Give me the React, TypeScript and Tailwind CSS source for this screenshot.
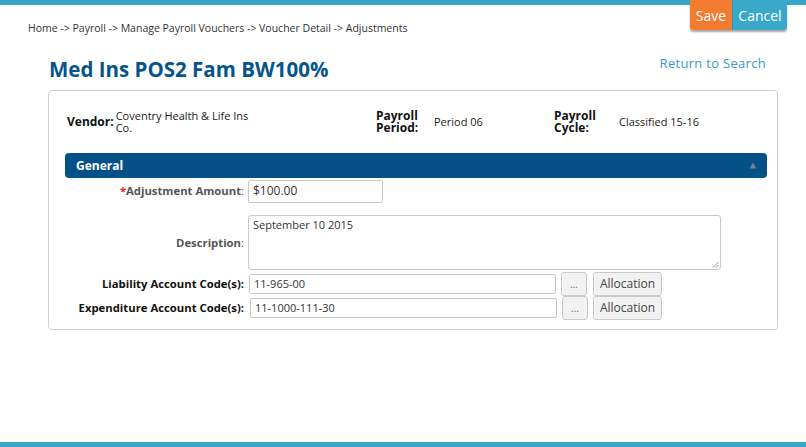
import React from "react";

const font = { fontFamily: '"Open Sans", "Noto Sans", sans-serif' };

export default function App() {
  return (
    <div className="relative w-[806px] h-[447px] bg-white overflow-hidden text-[#333]" style={font}>
      <div className="h-[5px] bg-[#38a6c8]" />
      <div className="absolute top-0 right-[19px] flex shadow-[0_2px_2px_rgba(0,0,0,0.35)] rounded-b-[3px] overflow-hidden">
        <button className="h-[30px] w-[42px] bg-[#f27b30] text-white text-[14px] leading-none pt-[1px]">Save</button>
        <button className="h-[30px] w-[55px] bg-[#3aa8c9] text-white text-[14px] leading-none pt-[1px] border-l border-[#2e95b5]">Cancel</button>
      </div>

      <div className="pl-[28px] pt-[16px] text-[10.5px] leading-[14px] text-[#333]">
        Home -&gt; Payroll -&gt; Manage Payroll Vouchers -&gt; Voucher Detail -&gt; Adjustments
      </div>

      <div className="ml-[48px] w-[730px]">
        <div className="flex items-start justify-between pt-[21px] h-[55px]">
          <div className="text-[20.5px] leading-[26px] font-bold text-[#05558c] ml-[1px]">Med Ins POS2 Fam BW100%</div>
          <div className="text-[13px] leading-[18px] text-[#3a9ac2] mr-[12px] mt-[-2px] tracking-[0.3px]">Return to Search</div>
        </div>

        <div className="border border-[#cfcfcf] rounded-[4px] h-[240px] pl-[16px] pr-[10px]">
          <div className="flex text-[11px] leading-[12px] pt-[19px] h-[62px]">
            <div className="flex w-[309px] ml-[2px]">
              <div className="font-bold text-[12px] pt-[6px] text-[#111]">Vendor:</div>
              <div className="w-[145px] ml-[2px] pt-[0px] text-[#222]">Coventry Health &amp; Life Ins Co.</div>
            </div>
            <div className="flex w-[178px]">
              <div className="font-bold text-[12px] w-[58px] text-[#111]">Payroll Period:</div>
              <div className="pt-[6px] text-[#222]">Period 06</div>
            </div>
            <div className="flex">
              <div className="font-bold text-[12px] w-[65px] text-[#111]">Payroll Cycle:</div>
              <div className="pt-[6px] text-[#222]">Classified 15-16</div>
            </div>
          </div>

          <div className="h-[25px] bg-[#035187] rounded-[4px] flex items-center justify-between px-[11px]">
            <span className="text-white font-bold text-[12px]">General</span>
            <svg width="8" height="7" viewBox="0 0 8 7" className="mr-[-1px]"><path d="M4 0.5 L7.5 6.5 L0.5 6.5 Z" fill="#6f7e90" /></svg>
          </div>

          <div className="text-[11.3px]">
            <div className="flex items-center h-[24px] mt-[1px]">
              <div className="w-[179px] text-right font-bold text-[#555]"><span className="text-[#e02020]">*</span>Adjustment Amount<span className="font-normal">:</span></div>
              <div className="ml-[4px] w-[135px] h-[23px] border border-[#c8c8c8] rounded-[2px] px-[4px] flex items-center text-[12px] text-[#333]">$100.00</div>
            </div>
            <div className="flex items-center h-[56px] mt-[12px]">
              <div className="w-[179px] text-right font-bold text-[#555]">Description<span className="font-normal">:</span></div>
              <div className="relative ml-[4px] w-[473px] h-[55px] border border-[#c8c8c8] rounded-[3px] px-[4px] pt-[1px] text-[11px] text-[#333] self-start">
                September 10 2015
                <svg width="7" height="7" viewBox="0 0 7 7" className="absolute right-[1px] bottom-[1px]"><path d="M6.5 1 L1 6.5 M6.5 4 L4 6.5" stroke="#777" strokeWidth="0.8" /></svg>
              </div>
            </div>
            <div className="flex items-center h-[24px] mt-[1px]">
              <div className="w-[179px] text-right font-bold text-[#111]">Liability Account Code(s)<span>:</span></div>
              <div className="ml-[5px] w-[307px] h-[20px] border border-[#c8c8c8] rounded-[2px] px-[4px] flex items-center text-[11px] text-[#333]">11-965-00</div>
              <button className="ml-[5px] w-[26px] h-[24px] border border-[#c8c8c8] rounded-[3px] bg-[#f2f2f2] text-[10px] text-[#666] leading-none">...</button>
              <button className="ml-[6px] w-[69px] h-[24px] border border-[#c8c8c8] rounded-[3px] bg-[#f2f2f2] text-[12px] text-[#444] leading-none">Allocation</button>
            </div>
            <div className="flex items-center h-[24px] mt-[0px]">
              <div className="w-[179px] text-right font-bold text-[#111]">Expenditure Account Code(s)<span>:</span></div>
              <div className="ml-[6px] w-[307px] h-[20px] border border-[#c8c8c8] rounded-[2px] px-[4px] flex items-center text-[11px] text-[#333]">11-1000-111-30</div>
              <button className="ml-[5px] w-[26px] h-[24px] border border-[#c8c8c8] rounded-[3px] bg-[#f2f2f2] text-[10px] text-[#666] leading-none">...</button>
              <button className="ml-[5px] w-[69px] h-[24px] border border-[#c8c8c8] rounded-[3px] bg-[#f2f2f2] text-[12px] text-[#444] leading-none">Allocation</button>
            </div>
          </div>
        </div>
      </div>

      <div className="absolute left-0 right-0 bottom-0 h-[5px] bg-[#38a6c8]" />
    </div>
  );
}
